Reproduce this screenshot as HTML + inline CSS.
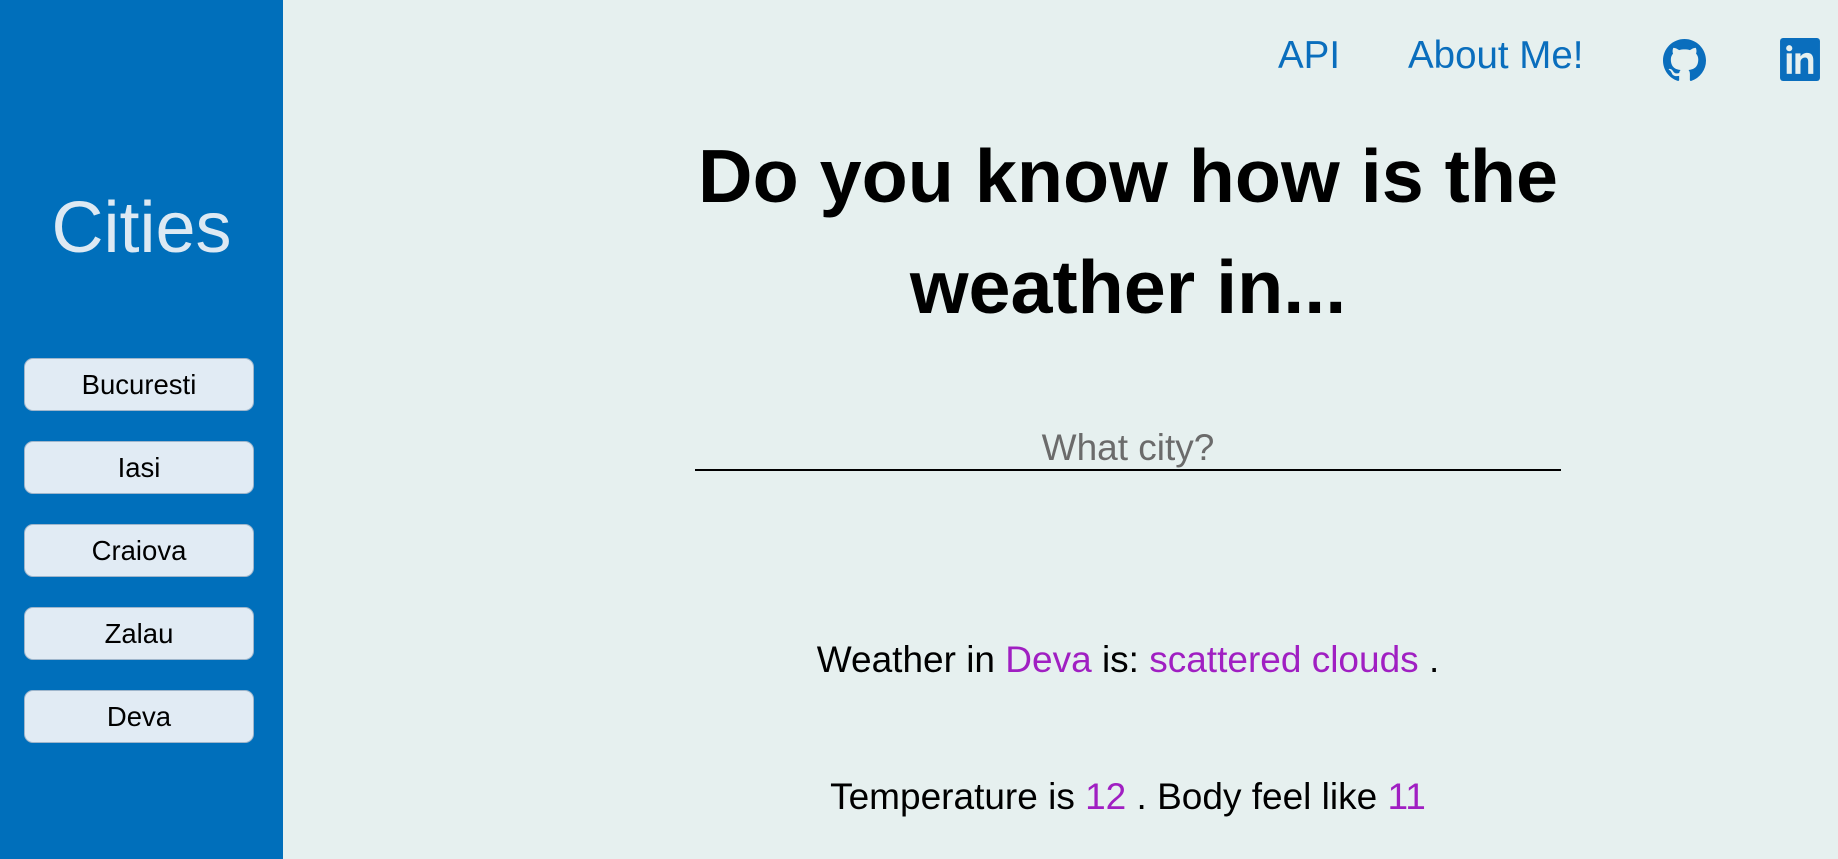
<!DOCTYPE html>
<html><head><meta charset="utf-8"><style>
*{margin:0;padding:0;box-sizing:border-box}
body{width:1838px;height:859px;overflow:hidden;background:#e6f0ef;font-family:"Liberation Sans",sans-serif;position:relative}
.side{position:absolute;left:0;top:0;width:283px;height:859px;background:#006fbb}
.side h2{position:absolute;left:0;width:283px;top:192px;text-align:center;font-weight:normal;font-size:72px;color:#dde9f3;line-height:1}
.btn{position:absolute;left:24px;width:230px;height:53px;background:#e1ebf4;border:1px solid #9fb6cc;border-radius:9px;text-align:center;line-height:51px;font-size:27.5px;color:#000}
.nav{position:absolute;top:36px;font-size:38.5px;color:#0a6ebd;line-height:40px}
.c{position:absolute;left:695px;width:866px;text-align:center}
h1{font-size:75.5px;line-height:111px;font-weight:bold;top:121px}
.inp{top:425px;height:46px;border-bottom:2px solid #000;font-size:37px;color:#6b6b6b;line-height:46px}
.t{font-size:37px;line-height:40px}
.p{color:#a01fc2}
</style></head><body>
<div class="side"><h2>Cities</h2>
<div class="btn" style="top:358px">Bucuresti</div>
<div class="btn" style="top:441px">Iasi</div>
<div class="btn" style="top:524px">Craiova</div>
<div class="btn" style="top:607px">Zalau</div>
<div class="btn" style="top:690px">Deva</div>
</div>
<div class="nav" style="left:1278px">API</div>
<div class="nav" style="left:1408px">About Me!</div>
<svg style="position:absolute;left:1663px;top:39px" width="43" height="43" viewBox="0 0 16 16"><path fill="#0a6ebd" d="M8 0C3.58 0 0 3.58 0 8c0 3.540 2.29 6.53 5.470 7.590.4.07.55-.17.55-.38 0-.19-.01-.82-.01-1.49-2.010.37-2.530-.49-2.690-.94-.09-.23-.48-.94-.82-1.130-.28-.15-.68-.52-.01-.53.63-.01 1.080.58 1.230.82.72 1.210 1.870.87 2.330.66.07-.52.28-.87.51-1.070-1.780-.2-3.640-.89-3.640-3.950 0-.87.31-1.590.82-2.150-.08-.2-.36-1.020.08-2.120 0 0 .67-.21 2.2.82.64-.18 1.320-.27 2-.27.68 0 1.360.09 2 .27 1.530-1.040 2.2-.82 2.2-.82.44 1.1.16 1.920.08 2.120.51.56.82 1.270.82 2.150 0 3.070-1.870 3.750-3.650 3.950.29.25.54.73.54 1.480 0 1.070-.01 1.930-.01 2.2 0 .21.15.46.55.38A8.013 8.013 0 0016 8c0-4.420-3.580-8-8-8z"/></svg>
<svg style="position:absolute;left:1779px;top:38px" width="42" height="43" viewBox="0 0 39 42"><rect width="39" height="42" rx="3" fill="#0a6ebd"/><circle cx="9" cy="10" r="3" fill="#e6f0ef"/><rect x="6.5" y="15" width="5" height="20" fill="#e6f0ef"/><path d="M15 15h5v3c1.5-2.5 4-3.5 6.5-3.5 4 0 6 2.5 6 7V35h-5V23c0-2.5-1-4-3-4s-4.5 1.5-4.5 4.5V35h-5z" fill="#e6f0ef"/></svg>
<h1 class="c">Do you know how is the<br>weather in...</h1>
<div class="c inp">What city?</div>
<div class="c t" style="top:640px">Weather in <span class="p">Deva</span> is: <span class="p">scattered clouds</span> .</div>
<div class="c t" style="top:777px">Temperature is <span class="p">12</span> . Body feel like <span class="p">11</span></div>
</body></html>
